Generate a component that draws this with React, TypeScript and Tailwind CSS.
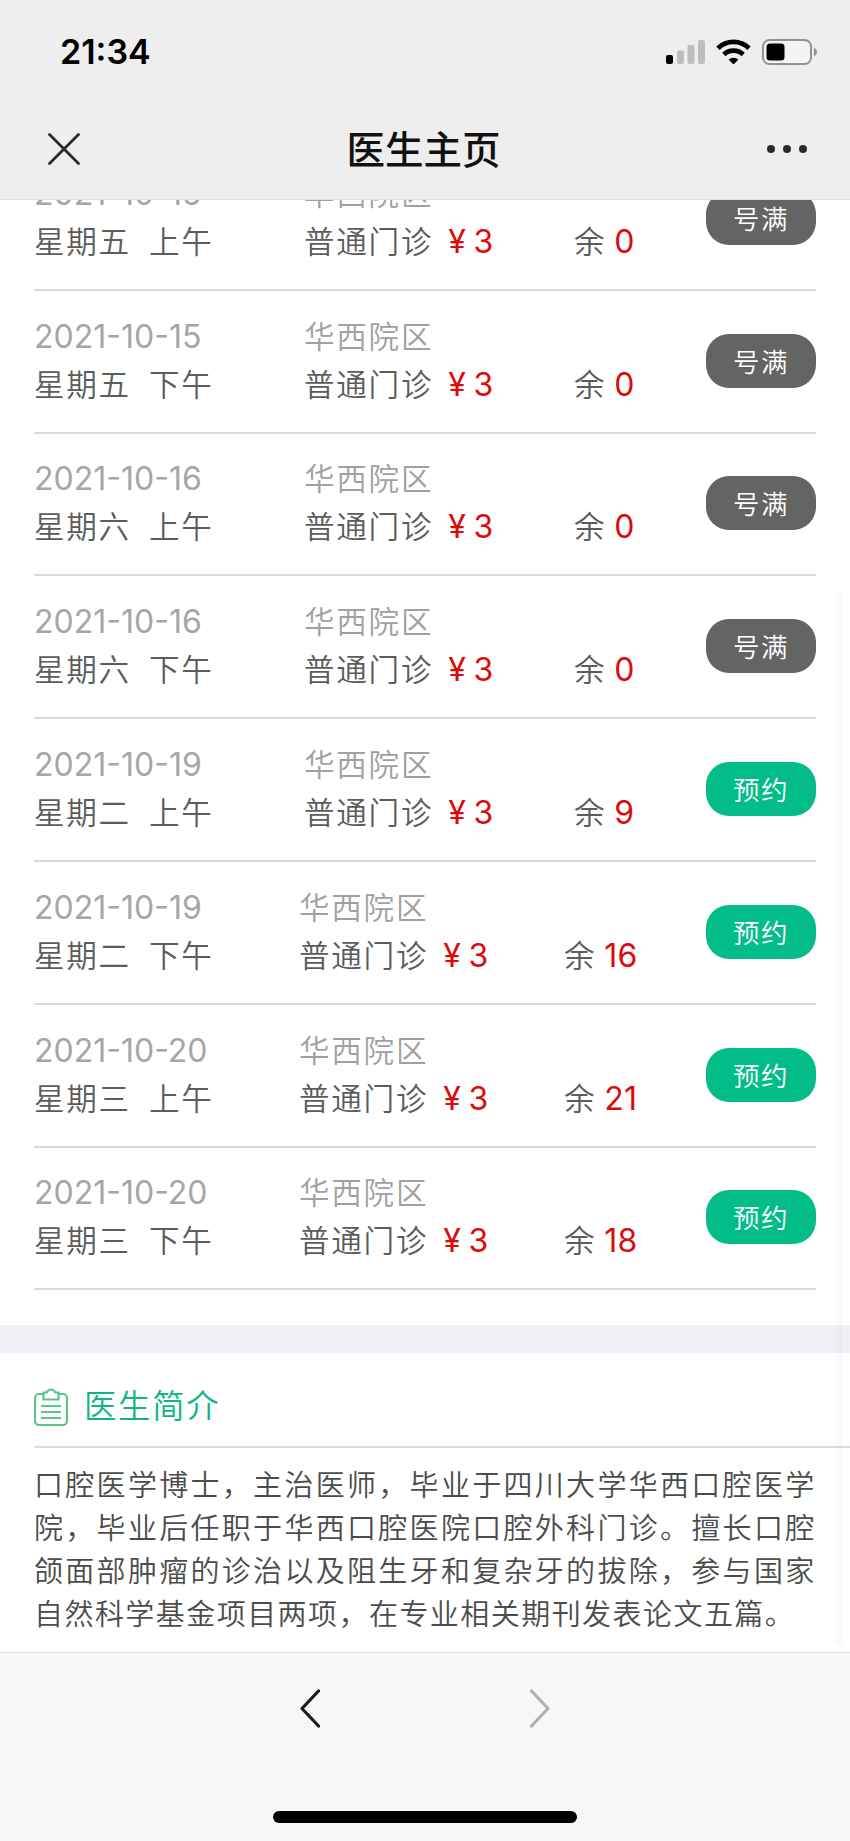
interface Schedule {
  date: string;
  week: string;
  period: string;
  left: number;
}

const schedules: Schedule[] = [
  { date: '2021-10-15', week: '星期五', period: '上午', left: 0 },
  { date: '2021-10-15', week: '星期五', period: '下午', left: 0 },
  { date: '2021-10-16', week: '星期六', period: '上午', left: 0 },
  { date: '2021-10-16', week: '星期六', period: '下午', left: 0 },
  { date: '2021-10-19', week: '星期二', period: '上午', left: 9 },
  { date: '2021-10-19', week: '星期二', period: '下午', left: 16 },
  { date: '2021-10-20', week: '星期三', period: '上午', left: 21 },
  { date: '2021-10-20', week: '星期三', period: '下午', left: 18 },
];

const introLines = [
  '口腔医学博士，主治医师，毕业于四川大学华西口腔医学',
  '院，毕业后任职于华西口腔医院口腔外科门诊。擅长口腔',
  '颌面部肿瘤的诊治以及阻生牙和复杂牙的拔除，参与国家',
  '自然科学基金项目两项，在专业相关期刊发表论文五篇。',
];

function StatusBar() {
  return (
    <div className="flex h-[104px] items-center justify-between pl-[60px] pr-8">
      <span className="text-[34px] font-semibold leading-none text-black">21:34</span>
      <div className="flex items-center">
        {/* Signal */}
        <svg className="h-[26px] w-[40px]" viewBox="0 0 40 26">
          <rect x="0" y="16" width="7" height="9" rx="2" fill="#000" />
          <rect x="11" y="11.5" width="7" height="13.5" rx="2" fill="#bdbdbd" />
          <rect x="21.5" y="6" width="7" height="19" rx="2" fill="#bdbdbd" />
          <rect x="32" y="1" width="7" height="24" rx="2" fill="#bdbdbd" />
        </svg>
        {/* Wifi */}
        <svg className="ml-2.5 h-[26px] w-[36px]" viewBox="0 0 36 26">
          <g fill="none" stroke="#000" strokeWidth="4.8">
            <path d="M1.9 9.2a22.6 22.6 0 0 1 31.2 0" />
            <path d="M7.8 15.4a14.2 14.2 0 0 1 19.4 0" />
          </g>
          <path d="M12.6 20.6a7.2 7.2 0 0 1 9.8 0L18.3 24.7a1.2 1.2 0 0 1-1.6 0z" fill="#000" />
        </svg>
        {/* Battery */}
        <svg className="ml-2.5 h-[26px] w-[56px]" viewBox="0 0 56 26">
          <rect x="1" y="1" width="48" height="24" rx="6.5" fill="#f4f4f4" stroke="#929292" strokeWidth="2" />
          <rect x="4.5" y="4.5" width="18" height="17" rx="3.5" fill="#000" />
          <path d="M52 8.8c4 1.7 4 6.7 0 8.4z" fill="#929292" />
        </svg>
      </div>
    </div>
  );
}

function NavBar() {
  return (
    <div className="flex h-[95px] items-center justify-between pb-[5px] pl-12 pr-[43px]">
      <svg className="h-8 w-8" viewBox="0 0 32 32" stroke="#2a2a2a" strokeWidth="2.8" strokeLinecap="round">
        <path d="M1.5 1.5l29 29M30.5 1.5l-29 29" />
      </svg>
      <h1 className="pt-[2px] text-[38.5px] font-medium leading-none text-[#111]">医生主页</h1>
      <svg className="h-2 w-10" viewBox="0 0 40 8" fill="#2a2a2a">
        <circle cx="4" cy="4" r="4" />
        <circle cx="20" cy="4" r="4" />
        <circle cx="36" cy="4" r="4" />
      </svg>
    </div>
  );
}

function ScheduleRow({ item }: { item: Schedule }) {
  // Two digit counts push the middle columns to the left
  const wide = item.left > 9;

  return (
    <div className="flex h-[142.8px] items-center border-b-2 border-[#d9d9d9] pb-px text-[30.6px] font-[350] leading-[48px] tracking-[1.7px] text-[#5c5c5c]">
      <div className={wide ? 'w-[265px]' : 'w-[270px]'}>
        <p className="text-[32px] font-normal tracking-[0px] text-[#a6a6a6]">{item.date}</p>
        <p className="whitespace-pre">
          {item.week}
          <span className="ml-[18px]">{item.period}</span>
        </p>
      </div>
      <div className={wide ? 'w-[265px]' : 'w-[270px]'}>
        <p className="text-[#a0a0a0]">华西院区</p>
        <p>
          普通门诊
          <span className="ml-[15px] text-[32px] font-normal text-[#dc0a0a]">¥</span>
          <span className="ml-[6px] text-[32px] font-normal text-[#dc0a0a]">3</span>
        </p>
      </div>
      <div className="flex-1 self-center pt-12">
        余<span className="ml-[8px] text-[32px] font-normal tracking-[0.3px] text-[#dc0a0a]">{item.left}</span>
      </div>
      <button
        className={`h-[54px] w-[110px] rounded-[23px] pt-[2px] text-[26.5px] leading-[52px] tracking-[1.4px] text-white ${
          item.left > 0 ? 'bg-[#03bd88]' : 'bg-[#636463]'
        }`}
      >
        {item.left > 0 ? '预约' : '号满'}
      </button>
    </div>
  );
}

function DoctorIntro() {
  return (
    <section className="pl-[34px]">
      <div className="flex h-[95px] items-center border-b-2 border-[#dcdcdc]">
        <svg className="mt-[14px] h-[38px] w-[34px]" viewBox="0 0 34 38" fill="none" stroke="#5cc68a" strokeWidth="2.2">
          <path d="M9 6H5a4 4 0 0 0-4 4v23a4 4 0 0 0 4 4h24a4 4 0 0 0 4-4V10a4 4 0 0 0-4-4h-4" />
          <path d="M9.5 4.5h3.2c1.6-4 7-4 8.6 0h3.2v7h-15z" />
          <path d="M7 18h20M7 24h20M7 30h20" />
        </svg>
        <h2 className="ml-[16px] mt-[15px] text-[32.4px] font-[350] leading-none tracking-[1.7px] text-[#10b585]">
          医生简介
        </h2>
      </div>
      <div className="w-[784px] pt-[16px] text-[29px] font-[350] leading-[43px] text-[#4c4c4c]">
        {introLines.map((line, i) => (
          <p
            key={line}
            className={i < 3 ? 'whitespace-nowrap tracking-[2.3px]' : 'whitespace-nowrap tracking-[1.45px]'}
          >
            {line}
          </p>
        ))}
      </div>
    </section>
  );
}

export default function App() {
  return (
    <div className="relative flex h-[1841px] w-[850px] flex-col overflow-hidden bg-white font-['Inter','Noto_Sans_CJK_SC',sans-serif]">
      <header className="z-10 h-[200px] shrink-0 border-b border-[#dedede] bg-[#eee]">
        <StatusBar />
        <NavBar />
      </header>

      <main className="flex-1 overflow-hidden">
        <div className="-mt-[52px] px-[34px]">
          {schedules.map((item) => (
            <ScheduleRow key={item.date + item.period} item={item} />
          ))}
        </div>
        <div className="mt-[35px] h-7 bg-[#efeff5]" />
        <DoctorIntro />
      </main>

      {/* Scroll indicator */}
      <div className="absolute right-[7px] top-[592px] h-[1054px] w-[7px] rounded-full bg-black/[0.02]" />

      <footer className="flex h-[189px] shrink-0 flex-col items-center border-t border-[#e0e0e0] bg-[#f7f7f7]">
        <div className="mt-9 flex w-[250px] justify-between">
          <svg className="h-[39px] w-5" viewBox="0 0 20 39" fill="none" stroke="#1a1a1a" strokeWidth="3.2" strokeLinecap="round" strokeLinejoin="round">
            <path d="M18.5 2L2 19.500l16.5 17.5" />
          </svg>
          <svg className="h-[39px] w-5" viewBox="0 0 20 39" fill="none" stroke="#b0b0b0" strokeWidth="3.2" strokeLinecap="round" strokeLinejoin="round">
            <path d="M1.5 2L18 19.5l-16.5 17.5" />
          </svg>
        </div>
        <div className="mt-[83px] h-3 w-[304px] rounded-full bg-black" />
      </footer>
    </div>
  );
}
